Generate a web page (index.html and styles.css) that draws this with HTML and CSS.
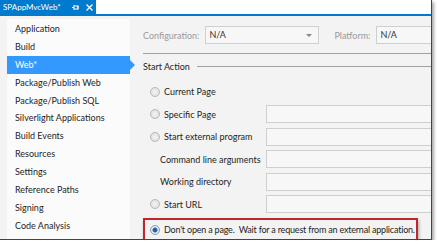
FILE: index.html
```html
<!DOCTYPE html>
<html lang="en">
<head>
    <meta charset="UTF-8">
    <title>SPAppMvcWeb - Web</title>
    <link rel="stylesheet" href="styles.css">
</head>
<body>
    <div class="window">
        <div class="tabbar">
            <div class="tab">
                <span>SPAppMvcWeb*</span>
                <svg class="pin" width="8" height="7" viewBox="0 0 8 7">
                    <path d="M0 3.5h2M2 1v5M2 2h4v3h-4M6 1.5v4" fill="none" stroke="white" stroke-width="1"/>
                </svg>
                <svg class="close" width="7" height="7" viewBox="0 0 7 7">
                    <path d="M0.5 0.5l6 6M6.5 0.5l-6 6" stroke="white" stroke-width="1.3"/>
                </svg>
            </div>
        </div>
        <div class="main">
            <ul class="nav">
                <li>Application</li>
                <li>Build</li>
                <li class="active">Web*</li>
                <li>Package/Publish Web</li>
                <li>Package/Publish SQL</li>
                <li>Silverlight Applications</li>
                <li>Build Events</li>
                <li>Resources</li>
                <li>Settings</li>
                <li>Reference Paths</li>
                <li>Signing</li>
                <li>Code Analysis</li>
            </ul>
            <div class="content">
                <div class="config-row">
                    <span class="label">Configuration:</span>
                    <div class="select config-select">N/A<span class="arrow"></span></div>
                    <span class="label platform-label">Platform:</span>
                    <div class="select platform-select">N/A</div>
                </div>
                <div class="rule"></div>
                <div class="group-title"><span>Start Action</span></div>
                <div class="options">
                    <div class="row">
                        <span class="radio"></span><span>Current Page</span>
                    </div>
                    <div class="row">
                        <span class="radio"></span><span class="opt-text">Specific Page</span><div class="textbox"></div>
                    </div>
                    <div class="row">
                        <span class="radio"></span><span class="opt-text">Start external program</span><div class="textbox"></div>
                    </div>
                    <div class="row sub">
                        <span class="opt-text">Command line arguments</span><div class="textbox"></div>
                    </div>
                    <div class="row sub">
                        <span class="opt-text">Working directory</span><div class="textbox"></div>
                    </div>
                    <div class="row">
                        <span class="radio"></span><span class="opt-text">Start URL</span><div class="textbox"></div>
                    </div>
                    <div class="row highlight">
                        <span class="radio checked"></span><span class="long">Don't open a page.&nbsp; Wait for a request from an external application.</span>
                    </div>
                </div>
            </div>
        </div>
    </div>
</body>
</html>
```

FILE: styles.css
```css
body {
    margin: 0;
    background-color: white;
    font-family: Lato, "Open Sans", sans-serif;
    font-size: 9px;
    color: #1e1e1e;
    white-space: nowrap;
}
.window {
    width: 431px;
    height: 239px;
    background-color: #f3f3f3;
    border-right: 1px solid #444;
    border-bottom: 1px solid #444;
    box-shadow: 2px 2px 3px rgba(0, 0, 0, 0.35);
    overflow: hidden;
}
.tabbar {
    height: 14px;
    border-bottom: 2px solid #007acc;
    background-color: white;
}
.tab {
    display: inline-flex;
    align-items: center;
    width: 90px;
    height: 14px;
    padding: 0 3px;
    background-color: #007acc;
    color: white;
    font-size: 8px;
    line-height: 14px;
}
.pin {
    margin-left: auto;
}
.close {
    margin-left: 6px;
}
.main {
    display: flex;
}
.nav {
    list-style: none;
    margin: 3px 0 0 7px;
    padding: 1px 0 0;
    width: 123px;
    flex: none;
    height: 225px;
    background-color: #fbfbfb;
}
.nav li {
    height: 17.9px;
    line-height: 18px;
    padding-left: 8px;
}
.nav li.active {
    position: relative;
    background-color: #3399ff;
    color: white;
}
.nav li.active::after {
    content: "";
    position: absolute;
    right: -5px;
    top: 4px;
    border-left: 5px solid #3399ff;
    border-top: 5px solid transparent;
    border-bottom: 5px solid transparent;
}
.content {
    flex: 1;
    min-width: 0;
    padding: 10px 0 0 13px;
}
.config-row {
    display: flex;
    align-items: center;
    height: 18px;
}
.label {
    color: #9a9a9a;
    margin-right: 6px;
}
.select {
    height: 16px;
    line-height: 16px;
    border: 1px solid #cfcfcf;
    background-color: #f7f7f7;
    padding-left: 3px;
    color: #333;
    position: relative;
    box-sizing: content-box;
}
.config-select {
    width: 109px;
}
.arrow {
    position: absolute;
    right: 6px;
    top: 7px;
    border-top: 3px solid #888;
    border-left: 3px solid transparent;
    border-right: 3px solid transparent;
}
.platform-label {
    margin-left: 15px;
}
.platform-select {
    flex: 1;
    border-right: none;
}
.rule {
    height: 0;
    border-top: 1px solid #a0a0a0;
    margin: 9px 0 0;
}
.group-title {
    display: flex;
    align-items: center;
    margin-top: 5px;
    height: 14px;
}
.group-title::after {
    content: "";
    flex: 1;
    border-top: 1px solid #a0a0a0;
    margin-left: 7px;
}
.options {
    padding: 9px 0 0 7px;
}
.row {
    display: flex;
    align-items: center;
    height: 19px;
    margin-bottom: 3.6px;
}
.row.sub {
    padding-left: 10px;
}
.radio {
    width: 10px;
    height: 10px;
    flex: none;
    border-radius: 50%;
    border: 1px solid #b8b8b8;
    background: radial-gradient(circle, #f4f4f4 0%, #dadada 100%);
    margin-right: 4px;
    box-sizing: border-box;
}
.radio.checked {
    background: radial-gradient(circle, #1f4f8f 0, #2c6bb5 2px, #e8eef5 3px, #d9dfe6 100%);
    border-color: #8b9bb0;
}
.opt-text {
    width: 102px;
    flex: none;
}
.row.sub .opt-text {
    width: 106px;
}
.textbox {
    flex: 1;
    height: 16px;
    border: 1px solid #cfcfcf;
    border-right: none;
    background-color: #f7f7f7;
}
.highlight {
    width: 266px;
    height: 20px;
    margin-left: -7px;
    padding-left: 5px;
    border: 2px solid #c0272d;
    box-shadow: 1px 2px 3px rgba(0, 0, 0, 0.3);
}
.long {
    letter-spacing: -0.2px;
}
```
